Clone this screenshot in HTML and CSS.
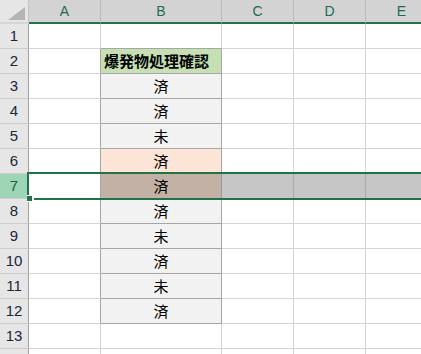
FILE: index.html
```html
<!DOCTYPE html>
<html lang="ja">
<head>
<meta charset="utf-8">
<link rel="stylesheet" href="styles.css">
</head>
<body>
<div class="sheet">
  <div class="row head">
    <div class="corner"><span class="tri"></span></div>
    <div class="ch">A</div><div class="ch">B</div><div class="ch">C</div><div class="ch">D</div><div class="ch">E</div>
  </div>
  <div class="row"><div class="rh">1</div><div class="c">&nbsp;</div><div class="c bt">&nbsp;</div><div class="c"></div><div class="c"></div><div class="c"></div></div>
  <div class="row"><div class="rh">2</div><div class="c ar"></div><div class="c b bhead">爆発物処理確認</div><div class="c"></div><div class="c"></div><div class="c"></div></div>
  <div class="row"><div class="rh">3</div><div class="c ar"></div><div class="c b bgray">済</div><div class="c"></div><div class="c"></div><div class="c"></div></div>
  <div class="row"><div class="rh">4</div><div class="c ar"></div><div class="c b bgray">済</div><div class="c"></div><div class="c"></div><div class="c"></div></div>
  <div class="row"><div class="rh">5</div><div class="c ar"></div><div class="c b bgray">未</div><div class="c"></div><div class="c"></div><div class="c"></div></div>
  <div class="row"><div class="rh">6</div><div class="c ar"></div><div class="c b bpeach">済</div><div class="c"></div><div class="c"></div><div class="c"></div></div>
  <div class="row"><div class="rh rsel">7</div><div class="c ar"></div><div class="c b bsel">済</div><div class="c sel"></div><div class="c sel"></div><div class="c sel"></div></div>
  <div class="row"><div class="rh">8</div><div class="c ar"></div><div class="c b bgray">済</div><div class="c"></div><div class="c"></div><div class="c"></div></div>
  <div class="row"><div class="rh">9</div><div class="c ar"></div><div class="c b bgray">未</div><div class="c"></div><div class="c"></div><div class="c"></div></div>
  <div class="row"><div class="rh">10</div><div class="c ar"></div><div class="c b bgray">済</div><div class="c"></div><div class="c"></div><div class="c"></div></div>
  <div class="row"><div class="rh">11</div><div class="c ar"></div><div class="c b bgray">未</div><div class="c"></div><div class="c"></div><div class="c"></div></div>
  <div class="row"><div class="rh">12</div><div class="c ar"></div><div class="c b bgray">済</div><div class="c"></div><div class="c"></div><div class="c"></div></div>
  <div class="row"><div class="rh">13</div><div class="c"></div><div class="c"></div><div class="c"></div><div class="c"></div><div class="c"></div></div>
  <div class="row"><div class="rh"></div><div class="c"></div><div class="c"></div><div class="c"></div><div class="c"></div><div class="c"></div></div>
  <div class="selection"></div>
  <div class="handle"></div>
</div>
</body>
</html>
```
FILE: styles.css
```css
html, body {
  margin: 0;
  padding: 0;
  background: #ffffff;
  overflow: hidden;
}
body {
  width: 421px;
  height: 354px;
  font-family: "Noto Sans CJK JP", "Liberation Sans", sans-serif;
}
.sheet {
  position: relative;
  width: 421px;
  height: 354px;
  overflow: hidden;
}
.row {
  display: grid;
  grid-template-columns: 29px 72px 121px 72px 72px 72px;
  height: 25px;
  width: 438px;
}
.row > div {
  box-sizing: border-box;
}
.head {
  height: 24px;
}
.corner {
  position: relative;
  background: #e6e6e6;
  border-right: 1px solid #c4c4c4;
  border-bottom: 2px solid #d6d6d6;
}
.tri {
  position: absolute;
  left: 8px;
  top: 7px;
  width: 0;
  height: 0;
  border-left: 17px solid transparent;
  border-bottom: 13px solid #b4b4b4;
}
.ch {
  background: #d3d3d3;
  border-right: 1px solid #b9b9b9;
  border-bottom: 2px solid #217346;
  color: #1f6a55;
  font-family: "Liberation Sans", sans-serif;
  font-size: 14px;
  line-height: 22px;
  text-align: center;
}
.rh {
  background: #e6e6e6;
  border-right: 1px solid #9f9f9f;
  border-bottom: 1px solid #cdcdcd;
  color: #20253a;
  font-family: "Liberation Sans", sans-serif;
  font-size: 15px;
  line-height: 24px;
  text-align: center;
}
.rsel {
  background: #9fd5b7;
  color: #17603a;
}
.c {
  border-right: 1px solid #d4d4d4;
  border-bottom: 1px solid #d4d4d4;
  font-size: 15px;
  line-height: 24px;
  color: #000000;
  white-space: nowrap;
  overflow: hidden;
}
.ar {
  border-right-color: #a6a6a6;
}
.bt {
  border-bottom-color: #a6a6a6;
}
.b {
  border-right-color: #a6a6a6;
  border-bottom-color: #a6a6a6;
  text-align: center;
}
.bhead {
  background: #c6e0b4;
  font-weight: bold;
  text-align: left;
  padding-left: 3px;
}
.bgray {
  background: #f2f2f2;
}
.bpeach {
  background: #fce4d6;
}
.bsel {
  background: #c4b1a5;
  border-right-color: #9a9a9a;
}
.sel {
  background: #c6c6c6;
  border-right-color: #a9a9a9;
}
.selection {
  position: absolute;
  left: 27px;
  top: 172px;
  width: 420px;
  height: 28px;
  box-sizing: border-box;
  border-top: 2px solid #217346;
  border-bottom: 2px solid #217346;
  border-left: 2px solid #217346;
}
.handle {
  position: absolute;
  left: 27px;
  top: 196px;
  width: 5px;
  height: 5px;
  background: #217346;
  box-shadow: 1px 0 0 1px #ffffff;
}
```
